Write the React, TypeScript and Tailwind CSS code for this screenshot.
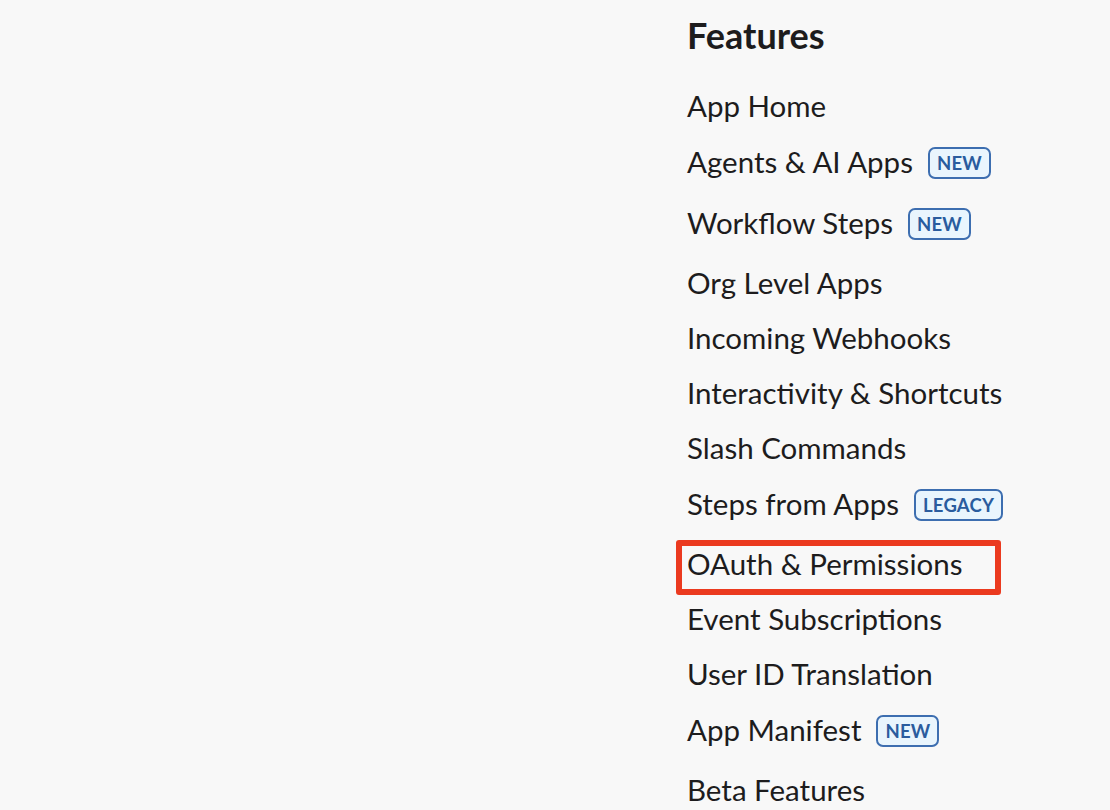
const items: { label: string; badge?: string; marked?: boolean }[] = [
  { label: "App Home" },
  { label: "Agents & AI Apps", badge: "NEW" },
  { label: "Workflow Steps", badge: "NEW" },
  { label: "Org Level Apps" },
  { label: "Incoming Webhooks" },
  { label: "Interactivity & Shortcuts" },
  { label: "Slash Commands" },
  { label: "Steps from Apps", badge: "LEGACY" },
  { label: "OAuth & Permissions", marked: true },
  { label: "Event Subscriptions" },
  { label: "User ID Translation" },
  { label: "App Manifest", badge: "NEW" },
  { label: "Beta Features" },
];

function Badge({ text }: { text: string }) {
  return (
    <span className="mt-[3px] inline-flex h-[32px] items-center rounded-[7px] border-2 border-[#3d6eb0] bg-[#e9f5fd] px-[7px] text-[18.5px] font-bold leading-none tracking-[0.01em] text-[#2a5c9e]">
      {text}
    </span>
  );
}

export default function App() {
  return (
    <div className="flex min-h-[810px] w-full bg-[#f8f8f8] font-['Lato','Liberation_Sans',sans-serif] text-[#1d1c1d]">
      <main className="flex-1" />
      <aside className="w-[423px] shrink-0 pt-[13px]">
        <h2 className="mb-[21px] text-[36px] font-bold leading-[44px]">Features</h2>
        <ul className="flex flex-col">
          {items.map((it) => (
            <li
              key={it.label}
              className={`relative flex items-center gap-[15px] ${it.badge ? "pt-[11px] pb-[15px]" : "py-[10px]"}`}
            >
              <span className="text-[29.5px] leading-[35px]">{it.label}</span>
              {it.badge && <Badge text={it.badge} />}
              {it.marked && (
                <span className="pointer-events-none absolute left-[-11px] top-[4px] h-[55px] w-[325px] rounded-[3px] border-[6px] border-[#eb3a1f]" />
              )}
            </li>
          ))}
        </ul>
      </aside>
    </div>
  );
}
